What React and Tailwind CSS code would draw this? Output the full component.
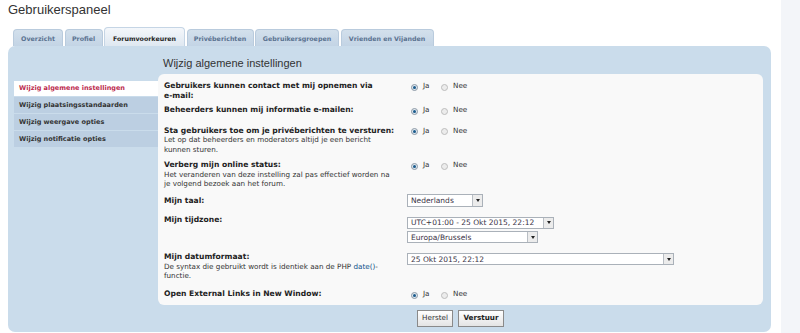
const tabs = [
  { label: "Overzicht", w: "w-[50px]" },
  { label: "Profiel", w: "w-[38px]" },
  { label: "Forumvoorkeuren", w: "w-[81px]", active: true },
  { label: "Privéberichten", w: "w-[67px]" },
  { label: "Gebruikersgroepen", w: "w-[84px]" },
  { label: "Vrienden en Vijanden", w: "w-[93px]" },
];

const menu = [
  "Wijzig algemene instellingen",
  "Wijzig plaatsingsstandaarden",
  "Wijzig weergave opties",
  "Wijzig notificatie opties",
];

function Radio({ checked }) {
  return checked ? (
    <span className="flex h-[7px] w-[7px] shrink-0 items-center justify-center rounded-full border border-[#8d99a6] bg-[#dfe7ee]">
      <span className="block h-[3px] w-[3px] rounded-full bg-[#1b5b8c]" />
    </span>
  ) : (
    <span className="block h-[7px] w-[7px] shrink-0 rounded-full border border-[#bdbdbd] bg-[#ececec]" />
  );
}

function YesNo() {
  return (
    <div className="flex items-start text-[7.2px] leading-[9.5px] text-[#333]">
      <span className="ml-[4px] mt-[2.75px]">
        <Radio checked />
      </span>
      <span className="ml-[5px] w-[18px]">Ja</span>
      <span className="mt-[2.75px]">
        <Radio />
      </span>
      <span className="ml-[5px]">Nee</span>
    </div>
  );
}

function Select({ w, text, className = "" }) {
  return (
    <div
      className={`flex border border-[#aab1b9] bg-white ${w} ${className}`}
    >
      <span className="flex flex-1 items-center whitespace-nowrap pl-[3px] text-[7.5px] text-[#3a3346]">
        {text}
      </span>
      <span className="flex w-[10px] items-center justify-center border-l border-[#b9bec4] bg-[#ececec]">
        <span className="h-0 w-0 border-x-[2.5px] border-t-[3px] border-x-transparent border-t-[#222]" />
      </span>
    </div>
  );
}

function Row({ className = "", label, desc, children }) {
  return (
    <div className={`flex items-start ${className}`}>
      <div className="w-[243px] shrink-0 whitespace-nowrap leading-[9.5px]">
        <div className="text-[7.6px] font-bold text-[#222]">{label}</div>
        {desc && <div className="text-[7.2px] text-[#333]">{desc}</div>}
      </div>
      <div>{children}</div>
    </div>
  );
}

export default function App() {
  return (
    <div className="flex h-[333px] w-[800px] overflow-hidden bg-white font-['DejaVu_Sans',Verdana,sans-serif]">
      <div className="w-[781px] shrink-0 pl-2 pr-[10px]">
        {/* Title */}
        <h2 className="h-[27px] pt-[2px] font-['Liberation_Sans',Arial,sans-serif] text-[13px] leading-[16px] text-[#333]">
          Gebruikerspaneel
        </h2>

        {/* Tabs */}
        <div className="flex h-[19px] items-end gap-[1.5px] pl-[5px]">
          {tabs.map((t) =>
            t.active ? (
              <div
                key={t.label}
                className={`h-[19px] ${t.w} rounded-t-[4px] border-x border-t border-[#c5d5e5] bg-gradient-to-b from-[#f4f7fb] to-[#dfe8f1] pt-[4px] text-center text-[6.3px] font-bold leading-[13px] text-[#1f1f1f]`}
              >
                {t.label}
              </div>
            ) : (
              <div
                key={t.label}
                className={`h-[17px] ${t.w} rounded-t-[4px] border-x border-t border-[#b9cbdd] bg-gradient-to-b from-[#d3e0ec] to-[#c3d4e5] pt-[2px] text-center text-[6.3px] font-bold leading-[13px] text-[#5a7290]`}
              >
                {t.label}
              </div>
            ),
          )}
        </div>

        {/* Panel */}
        <div className="flex h-[286px] rounded-[7px] bg-[#cadceb]">
          {/* Side menu */}
          <div className="w-[150px] shrink-0 pl-[6px] pt-[35px]">
            {menu.map((m, i) =>
              i === 0 ? (
                <div
                  key={m}
                  className="h-[15px] bg-white pl-[5px] text-[6.5px] font-bold leading-[15px] text-[#bc2a4d]"
                >
                  {m}
                </div>
              ) : (
                <div
                  key={m}
                  className="mt-[1px] h-[16px] bg-[#bccfe2] pl-[5px] text-[6.5px] font-bold leading-[16px] text-[#333]"
                >
                  {m}
                </div>
              ),
            )}
          </div>

          {/* Content */}
          <div className="flex-1 pr-[8px]">
            <h3 className="h-[28px] pl-[5px] pt-[10px] font-['Liberation_Sans',Arial,sans-serif] text-[11px] leading-[14px] text-[#333]">
              Wijzig algemene instellingen
            </h3>

            <div className="h-[231px] rounded-[6px] bg-[#f9f9f9] pl-[6px] pt-[7.25px]">
              <Row
                label={
                  <>
                    Gebruikers kunnen contact met mij opnemen via
                    <br />
                    e-mail:
                  </>
                }
              >
                <YesNo />
              </Row>

              <Row className="mt-[5px]" label="Beheerders kunnen mij informatie e-mailen:">
                <YesNo />
              </Row>

              <Row
                className="mt-[10.5px]"
                label="Sta gebruikers toe om je privéberichten te versturen:"
                desc={
                  <>
                    Let op dat beheerders en moderators altijd je een bericht
                    <br />
                    kunnen sturen.
                  </>
                }
              >
                <YesNo />
              </Row>

              <Row
                className="mt-[6px]"
                label="Verberg mijn online status:"
                desc={
                  <>
                    Het veranderen van deze instelling zal pas effectief worden na
                    <br />
                    je volgend bezoek aan het forum.
                  </>
                }
              >
                <YesNo />
              </Row>

              <div className="mt-[5.25px] flex items-start">
                <div className="w-[243px] shrink-0 text-[7.6px] font-bold leading-[13px] text-[#222]">
                  Mijn taal:
                </div>
                <Select w="w-[76px] h-[13px]" text="Nederlands" />
              </div>

              <div className="mt-[8.5px] flex items-start">
                <div className="w-[243px] shrink-0 text-[7.6px] font-bold leading-[9.5px] text-[#222]">
                  Mijn tijdzone:
                </div>
                <div className="mt-[1.5px]">
                  <Select w="w-[147px] h-[12px]" text="UTC+01:00 - 25 Okt 2015, 22:12" />
                  <Select className="mt-[2.5px]" w="w-[131px] h-[12px]" text="Europa/Brussels" />
                </div>
              </div>

              <Row
                className="mt-[9px]"
                label="Mijn datumformaat:"
                desc={
                  <>
                    De syntax die gebruikt wordt is identiek aan de PHP{" "}
                    <span className="text-[#105289]">date()</span>-
                    <br />
                    functie.
                  </>
                }
              >
                <Select className="mt-[1px]" w="w-[267px] h-[12px]" text="25 Okt 2015, 22:12" />
              </Row>

              <Row className="mt-[8px]" label="Open External Links in New Window:">
                <YesNo />
              </Row>
            </div>

            {/* Buttons */}
            <div className="mt-[5px] flex justify-center gap-[5px]">
              <button className="h-[17px] w-[36px] border border-[#8a8a8a] bg-gradient-to-b from-white to-[#e4e4e4] text-[7.2px] text-[#333]">
                Herstel
              </button>
              <button className="h-[17px] w-[46px] border border-[#8a8a8a] bg-gradient-to-b from-white to-[#e4e4e4] text-[7.2px] font-bold text-[#222]">
                Verstuur
              </button>
            </div>
          </div>
        </div>
      </div>
      <div className="flex-1 bg-[#f3f5f9]" />
    </div>
  );
}
